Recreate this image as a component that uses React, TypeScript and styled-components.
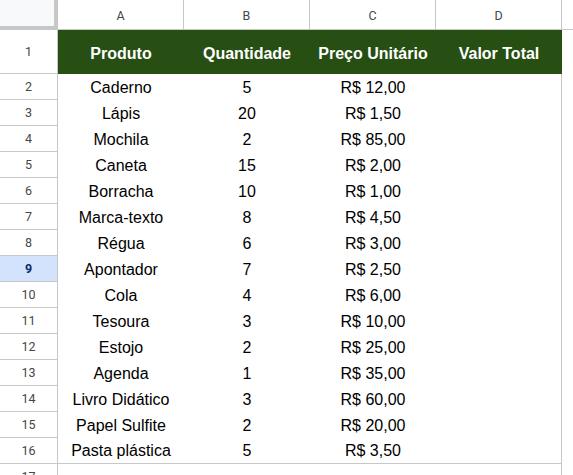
import React from "react";
import styled, { createGlobalStyle, css } from "styled-components";

const Global = createGlobalStyle`
  html, body { margin: 0; padding: 0; background: #ffffff; overflow: hidden; }
  body { font-family: "Liberation Sans", Arial, sans-serif; }
`;

const Sheet = styled.div`
  width: 573px;
  height: 475px;
  overflow: hidden;
  background: #fff;
`;

const Row = styled.div<{ $h: number }>`
  display: grid;
  grid-template-columns: 58px 126px 126px 126px 126px 1fr;
  height: ${(p) => p.$h}px;
`;

const Corner = styled.div`
  background: #f8f9fa;
  border-right: 4px solid #c7c7c7;
  border-bottom: 4px solid #c7c7c7;
  box-sizing: border-box;
`;

const ColHead = styled.div<{ $last?: boolean }>`
  box-sizing: border-box;
  display: flex;
  align-items: center;
  justify-content: center;
  font-family: Roboto, "Liberation Sans", Arial, sans-serif;
  font-size: 12.5px;
  color: #444746;
  border-right: ${(p) => (p.$last ? "none" : "1px solid #c7c7c7")};
  border-bottom: 1px solid #c7c7c7;
  padding-top: 1px;
`;

const RowHead = styled.div<{ $sel?: boolean }>`
  box-sizing: border-box;
  display: flex;
  align-items: center;
  justify-content: center;
  font-family: Roboto, "Liberation Sans", Arial, sans-serif;
  font-size: 12.5px;
  color: #444746;
  border-right: 1px solid #c7c7c7;
  border-bottom: 1px solid #c7c7c7;
  ${(p) =>
    p.$sel &&
    css`
      background: #d3e3fd;
      color: #0b2a66;
      font-weight: bold;
    `}
`;

const HeadCell = styled.div`
  background: #274e13;
  color: #ffffff;
  font-weight: bold;
  font-size: 16px;
  display: flex;
  align-items: center;
  justify-content: center;
  padding-top: 3px;
  box-sizing: border-box;
  white-space: nowrap;
`;

const Cell = styled.div<{ $right?: boolean; $bottom?: boolean }>`
  box-sizing: border-box;
  display: flex;
  align-items: center;
  justify-content: center;
  font-size: 16px;
  color: #000;
  white-space: nowrap;
  padding-top: 1px;
  border-right: ${(p) => (p.$right ? "1px solid #c7c7c7" : "none")};
  border-bottom: ${(p) => (p.$bottom ? "1px solid #c7c7c7" : "none")};
`;

const Blank = styled.div``;

const rows: [string, string, string][] = [
  ["Caderno", "5", "R$ 12,00"],
  ["Lápis", "20", "R$ 1,50"],
  ["Mochila", "2", "R$ 85,00"],
  ["Caneta", "15", "R$ 2,00"],
  ["Borracha", "10", "R$ 1,00"],
  ["Marca-texto", "8", "R$ 4,50"],
  ["Régua", "6", "R$ 3,00"],
  ["Apontador", "7", "R$ 2,50"],
  ["Cola", "4", "R$ 6,00"],
  ["Tesoura", "3", "R$ 10,00"],
  ["Estojo", "2", "R$ 25,00"],
  ["Agenda", "1", "R$ 35,00"],
  ["Livro Didático", "3", "R$ 60,00"],
  ["Papel Sulfite", "2", "R$ 20,00"],
  ["Pasta plástica", "5", "R$ 3,50"],
];

export default function App() {
  return (
    <Sheet>
      <Global />
      <Row $h={30}>
        <Corner />
        <ColHead>A</ColHead>
        <ColHead>B</ColHead>
        <ColHead>C</ColHead>
        <ColHead>D</ColHead>
        <ColHead $last />
      </Row>
      <Row $h={44}>
        <RowHead>1</RowHead>
        <HeadCell>Produto</HeadCell>
        <HeadCell>Quantidade</HeadCell>
        <HeadCell>Preço Unitário</HeadCell>
        <HeadCell>Valor Total</HeadCell>
        <Cell />
      </Row>
      {rows.map((r, i) => {
        const n = i + 2;
        const last = i === rows.length - 1;
        return (
          <Row $h={26} key={n}>
            <RowHead $sel={n === 9}>{n}</RowHead>
            <Cell $bottom={last}>{r[0]}</Cell>
            <Cell $bottom={last}>{r[1]}</Cell>
            <Cell $bottom={last}>{r[2]}</Cell>
            <Cell $bottom={last} $right />
            <Blank />
          </Row>
        );
      })}
      <Row $h={26}>
        <RowHead>17</RowHead>
        <Cell />
        <Cell />
        <Cell />
        <Cell $right />
        <Blank />
      </Row>
    </Sheet>
  );
}
